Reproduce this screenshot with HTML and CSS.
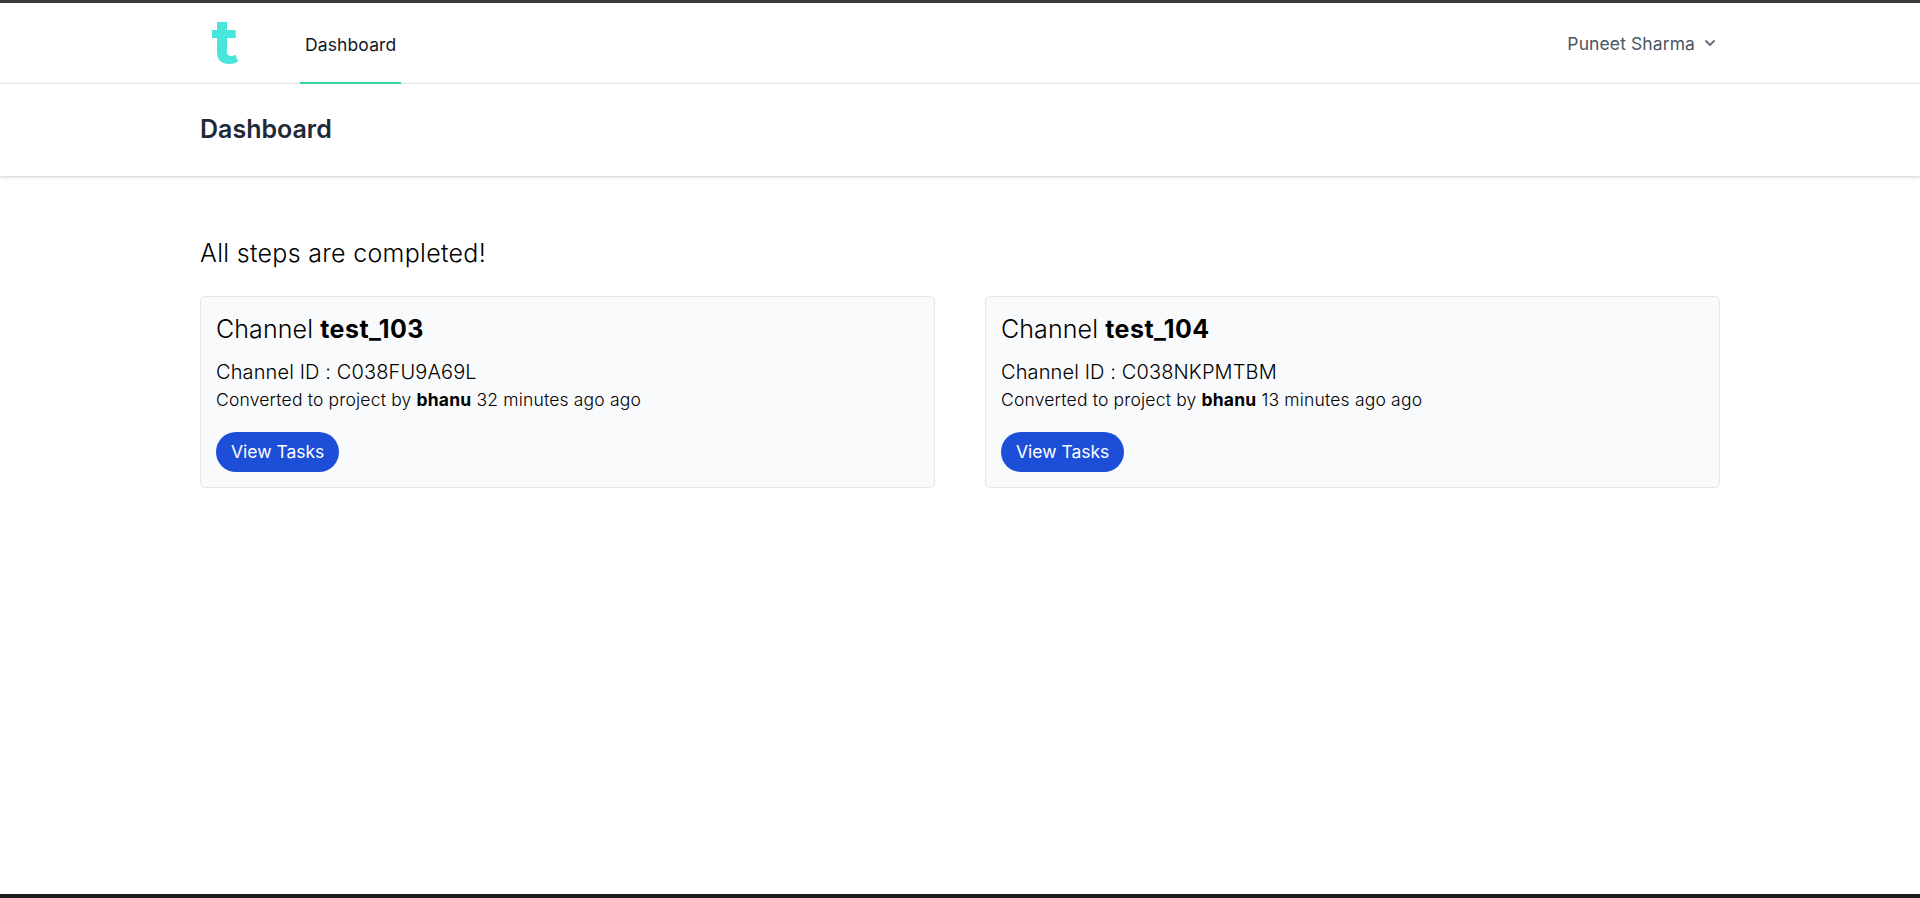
FILE: index.html
```html
<!DOCTYPE html>
<html lang="en">
<head>
<meta charset="utf-8">
<title>Dashboard</title>
<link rel="stylesheet" href="styles.css">
</head>
<body>
<div class="page">
  <nav class="nav">
    <div class="container nav-row">
      <svg class="logo" viewBox="0 0 26 42"><path d="M5 0H15V8H23.700V16H15V29.500Q15 34 19 34Q21 34 23.500 32.800L26 39.700Q22 42 17.500 42Q5 42 5 29.500V16H0V8H5Z"/></svg>
      <a class="nav-link">Dashboard</a>
      <button class="user"><span>Puneet Sharma</span><svg class="chevron" viewBox="0 0 20 20"><path fill-rule="evenodd" clip-rule="evenodd" d="M5.293 7.293a1 1 0 011.414 0L10 10.586l3.293-3.293a1 1 0 111.414 1.414l-4 4a1 1 0 01-1.414 0l-4-4a1 1 0 010-1.414z"/></svg></button>
    </div>
  </nav>
  <header class="header"><h2 class="container title">Dashboard</h2></header>
  <main class="container main">
    <h3 class="status">All steps are completed!</h3>
    <div class="cards">
      <section class="card">
        <h4 class="card-title">Channel <b>test_103</b></h4>
        <p class="channel-id">Channel ID : C038FU9A69L</p>
        <p class="converted">Converted to project by <b>bhanu</b> 32 minutes ago ago</p>
        <button class="view">View Tasks</button>
      </section>
      <section class="card">
        <h4 class="card-title">Channel <b>test_104</b></h4>
        <p class="channel-id">Channel ID : C038NKPMTBM</p>
        <p class="converted">Converted to project by <b>bhanu</b> 13 minutes ago ago</p>
        <button class="view">View Tasks</button>
      </section>
    </div>
  </main>
</div>
</body>
</html>
```
FILE: styles.css
```css
* { box-sizing: border-box; margin: 0; }
body { font-family: Inter, sans-serif; color: #000; background: #fff; }
button { border: 0; background: none; font: inherit; padding: 0; }
.page { height: 898px; overflow: hidden; border-top: 3px solid #3b3a3e; border-bottom: 4px solid #1c1b1c; }
.container { width: 1520px; margin: 0 auto; }
.nav { height: 81px; border-bottom: 1px solid #e8e9eb; }
.nav-row { display: flex; height: 81px; padding-left: 12px; }
.logo { width: 26px; height: 42px; margin-top: 19px; fill: #48e5dc; }
.nav-link { display: flex; align-items: center; height: 81px; margin-left: 62px; padding: 4px 5px 0; border-bottom: 2px solid #34d399; font-size: 17.5px; letter-spacing: .12px; color: #111827; }
.user { display: flex; align-items: center; gap: 5px; height: 80px; margin-left: auto; font-size: 17.5px; letter-spacing: .1px; color: #4b5563; }
.chevron { width: 20px; height: 20px; fill: #6b7280; }
.header { height: 92px; box-shadow: 0 1px 4px rgb(0 0 0 / 10%), 0 1px 2px rgb(0 0 0 / 10%); }
.title { padding-top: 30px; font-size: 25px; line-height: 31px; font-weight: 600; color: #1f2937; }
.main { padding-top: 60px; }
.status { font-size: 25px; line-height: 35px; font-weight: 300; letter-spacing: .3px; }
.cards { display: grid; grid-template-columns: 1fr 1fr; gap: 50px; margin-top: 25px; }
.card { height: 192px; padding: 15px; border: 1px solid #e5e7eb; border-radius: 5px; background: #f9fafc; }
.card-title { font-size: 25px; line-height: 35px; font-weight: 300; letter-spacing: .1px; }
.card-title b { letter-spacing: .45px; }
.channel-id { margin-top: 10px; font-size: 20px; line-height: 30px; font-weight: 300; letter-spacing: .12px; }
.converted { font-size: 17.5px; line-height: 25px; font-weight: 300; letter-spacing: .18px; }
b { font-weight: 700; }
.view { display: block; height: 40px; margin-top: 20px; padding: 0 15px 2px; border-radius: 20px; background: #1d4ed8; color: #fff; font-size: 17.5px; }
```
